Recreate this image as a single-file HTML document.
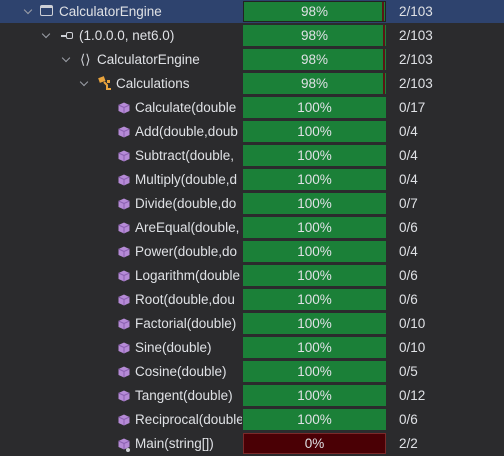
<!DOCTYPE html><html><head><style>
body{margin:0;width:504px;height:454px;background:#2b2b2d;font-family:"Liberation Sans",sans-serif;font-size:13.5px;color:#dfe1e5;overflow:hidden;position:relative}
.r{position:absolute;left:0;width:504px;height:24px}
.sel{background:#2e436e;height:23px}
.n{position:absolute;top:0;line-height:23px;white-space:nowrap;overflow:hidden}
.chev{position:absolute;top:7px;width:5px;height:5px;border-right:1.3px solid #9da0a8;border-bottom:1.3px solid #9da0a8;transform:rotate(45deg)}
.bar{position:absolute;left:243px;top:1px;width:143px;height:21px;background:#1b8038;text-align:center;line-height:21px;box-sizing:border-box}
.red{position:absolute;right:1px;top:0;width:2px;height:21px;background:#5a1515}
.c{position:absolute;left:399px;top:0;line-height:23px}
.m{position:absolute;left:118px;top:6px}
</style></head><body>
<div class="r sel" style="top:0">
<div class="chev" style="left:25px"></div>
<div style="position:absolute;left:40px;top:5px;width:13px;height:11px;border:1.3px solid #ced0d6;border-radius:2px;box-sizing:border-box;border-top-width:3px"></div>
<div class="n" style="left:59px">CalculatorEngine</div>
<div class="bar" style="border:1px solid #222;line-height:19px">98%<div class="red" style="height:19px"></div></div><div class="c">2/103</div></div>
<div class="r" style="top:24px">
<div class="chev" style="left:43px"></div>
<div style="position:absolute;left:61px;top:11px;width:5px;height:1.5px;background:#ced0d6"></div>
<div style="position:absolute;left:66px;top:8px;width:7px;height:7px;border:1.3px solid #ced0d6;border-radius:2px;box-sizing:border-box"></div>
<div class="n" style="left:79px">(1.0.0.0, net6.0)</div>
<div class="bar">98%<div class="red"></div></div><div class="c">2/103</div></div>
<div class="r" style="top:48px">
<div class="chev" style="left:63px"></div>
<div class="n" style="left:80px;color:#ced0d6">⟨⟩</div>
<div class="n" style="left:97px">CalculatorEngine</div>
<div class="bar">98%<div class="red"></div></div><div class="c">2/103</div></div>
<div class="r" style="top:72px">
<div class="chev" style="left:81px"></div>
<svg style="position:absolute;left:98px;top:4px" width="14" height="15"><rect x="1" y="1" width="6" height="5" fill="#e8a33d" transform="rotate(-20 4 4)"/><path d="M6 6 L9 9 L9 13 L13 13" stroke="#e8a33d" stroke-width="2" fill="none"/><rect x="9" y="4" width="3" height="3" fill="#e8a33d"/></svg>
<div class="n" style="left:116px">Calculations</div>
<div class="bar">98%<div class="red"></div></div><div class="c">2/103</div></div>
<div id="m"></div>
<script>
var d=[["Calculate(double","0/17"],["Add(double,doub","0/4"],["Subtract(double,","0/4"],["Multiply(double,d","0/4"],["Divide(double,do","0/7"],["AreEqual(double,","0/6"],["Power(double,do","0/4"],["Logarithm(double","0/6"],["Root(double,dou","0/6"],["Factorial(double)","0/10"],["Sine(double)","0/10"],["Cosine(double)","0/5"],["Tangent(double)","0/12"],["Reciprocal(double","0/6"]];
var h="";var ic='<svg class="m" width="12" height="12"><path d="M6 0.5 L11.5 3 L11.5 9 L6 11.5 L0.5 9 L0.5 3Z" fill="#b58ad6"/><path d="M0.5 3 L6 5.5 L11.5 3 M6 5.5 L6 11.5" stroke="#8a5fb0" stroke-width="1" fill="none"/></svg>';
d.forEach(function(x,i){h+='<div class="r" style="top:'+(96+i*24)+'px">'+ic+'<div class="n" style="left:135px;width:107px">'+x[0]+'</div><div class="bar">100%</div><div class="c">'+x[1]+'</div></div>';});
h+='<div class="r" style="top:432px">'+ic+'<div style="position:absolute;left:126px;top:16px;width:4px;height:4px;background:#ced0d6;border-radius:2px"></div><div class="n" style="left:135px">Main(string[])</div><div class="bar" style="background:#4a0005;border:1px solid #7a2a2a;line-height:19px">0%</div><div class="c">2/2</div></div>';
document.getElementById("m").innerHTML=h;
</script>
</body></html>
